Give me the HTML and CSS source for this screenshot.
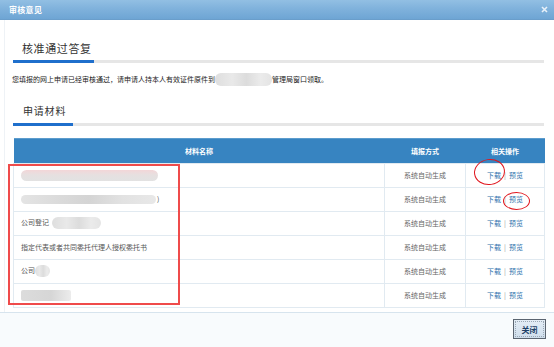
FILE: index.html
```html
<!DOCTYPE html>
<html lang="zh-CN">
<head>
    <meta charset="UTF-8">
    <title>审核意见</title>
    <link rel="stylesheet" href="styles.css">
</head>
<body>
    <div class="dialog">
        <div class="titlebar">
            <span class="title">审核意见</span>
            <svg class="close" width="7" height="7" viewBox="0 0 7 7">
                <path d="M1 1 L6 6 M6 1 L1 6" stroke="#e8f1f9" stroke-width="1.6"/>
            </svg>
        </div>
        <div class="content">
            <div class="section-title">核准通过答复</div>
            <div class="bar"><span class="bar-fill"></span></div>
            <p class="notice">您填报的网上申请已经审核通过，请申请人持本人有效证件原件到<span class="blur blur-notice"></span>管理局窗口领取。</p>
            <div class="section-title second">申请材料</div>
            <div class="bar"><span class="bar-fill short"></span></div>
            <div class="table-wrap">
                <table class="materials">
                    <thead>
                        <tr>
                            <th class="col-name">材料名称</th>
                            <th class="col-way">填报方式</th>
                            <th class="col-op">相关操作</th>
                        </tr>
                    </thead>
                    <tbody>
                        <tr>
                            <td class="name"><span class="blur blur-pink"></span></td>
                            <td class="way">系统自动生成</td>
                            <td class="op"><a href="#">下载</a><span class="sep">|</span><a href="#">预览</a></td>
                        </tr>
                        <tr>
                            <td class="name"><span class="blur blur-long"></span>)</td>
                            <td class="way">系统自动生成</td>
                            <td class="op"><a href="#">下载</a><span class="sep">|</span><a href="#">预览</a></td>
                        </tr>
                        <tr>
                            <td class="name">公司登记<span class="blur blur-mid"></span></td>
                            <td class="way">系统自动生成</td>
                            <td class="op"><a href="#">下载</a><span class="sep">|</span><a href="#">预览</a></td>
                        </tr>
                        <tr>
                            <td class="name">指定代表或者共同委托代理人授权委托书</td>
                            <td class="way">系统自动生成</td>
                            <td class="op"><a href="#">下载</a><span class="sep">|</span><a href="#">预览</a></td>
                        </tr>
                        <tr>
                            <td class="name">公司<span class="blur blur-small"></span></td>
                            <td class="way">系统自动生成</td>
                            <td class="op"><a href="#">下载</a><span class="sep">|</span><a href="#">预览</a></td>
                        </tr>
                        <tr>
                            <td class="name"><span class="blur blur-last"></span></td>
                            <td class="way">系统自动生成</td>
                            <td class="op"><a href="#">下载</a><span class="sep">|</span><a href="#">预览</a></td>
                        </tr>
                    </tbody>
                </table>
                <div class="mark-box"></div>
                <div class="mark-ring ring-download"></div>
                <div class="mark-ring ring-preview"></div>
            </div>
        </div>
        <div class="footer">
            <button class="btn-close">关闭</button>
        </div>
    </div>
</body>
</html>
```

FILE: styles.css
```css
body {
    margin: 0;
    font-family: "Liberation Sans", "Noto Sans CJK SC", sans-serif;
    background: #fff;
}
.dialog {
    width: 554px;
    height: 347px;
    display: flex;
    flex-direction: column;
    overflow: hidden;
}
.titlebar {
    height: 20px;
    flex: none;
    display: flex;
    align-items: center;
    justify-content: space-between;
    padding: 0 6px 0 9px;
    background: linear-gradient(#92bfe3, #80b2dc 45%, #6ea5d4);
    border-bottom: 1px solid #6a9ecb;
    box-sizing: border-box;
}
.title {
    color: #fff;
    font-size: 8px;
    font-weight: bold;
    letter-spacing: 0.3px;
}
.close {
    display: block;
}
.content {
    flex: 1;
    padding: 20px 10px 0 13px;
    border-left: 1px solid #eef2f6;
    margin-left: 4px;
    padding-left: 8px;
}
.section-title {
    font-family: "Noto Sans CJK SC", sans-serif;
    font-size: 11px;
    line-height: 16px;
    color: #333;
    padding-left: 9px;
    letter-spacing: 0.6px;
}
.section-title.second {
    margin-top: 17px;
    font-size: 10px;
    letter-spacing: 0.8px;
    padding-left: 10px;
}
.bar {
    margin-top: 4px;
    height: 3px;
    background: #e6e6e6;
}
.bar-fill {
    display: block;
    width: 81px;
    height: 3px;
    background: #1f6fcc;
}
.bar-fill.short {
    width: 60px;
}
.notice {
    margin: 11px 0 0 -1px;
    font-family: "Noto Sans CJK SC", sans-serif;
    font-size: 7px;
    line-height: 10px;
    color: #222;
}
.blur {
    display: inline-block;
    vertical-align: middle;
    height: 11px;
    border-radius: 6px;
    background: linear-gradient(90deg, #dedede, #e9e9e9 30%, #dcdcdc 55%, #ebebeb 80%, #e4e4e4);
    filter: blur(0.6px);
}
.blur-notice {
    width: 57px;
    height: 13px;
    margin: -2px 0 0;
}
.table-wrap {
    position: relative;
    margin-top: 12px;
}
.materials {
    width: 531px;
    border-collapse: collapse;
    table-layout: fixed;
    font-family: "Noto Sans CJK SC", sans-serif;
    font-size: 7px;
}
.materials th {
    height: 24px;
    padding: 0;
    background: #3784c1;
    color: #fff;
    font-weight: bold;
    border-top: 1px solid #5c9ccd;
}
.col-name { width: 371px; }
.col-way { width: 81px; }
.col-op { width: 79px; }
.materials td {
    height: 23px;
    padding: 0;
    border: 1px solid #e1eaf1;
    color: #666;
}
.materials td.name {
    padding-left: 7px;
    color: #555;
}
.materials td.way {
    text-align: center;
}
.materials td.op {
    text-align: center;
}
.op a {
    color: #2f73ad;
    text-decoration: none;
}
.sep {
    color: #999;
    margin: 0 3px;
}
.blur-pink {
    width: 137px;
    background: linear-gradient(#f3d6d8, #e6e0e0 45%, #e2e2e2);
}
.blur-long {
    width: 135px;
    height: 9px;
    margin-right: 1px;
    background: linear-gradient(90deg, #e4e4e4, #dadada 30%, #d4d4d4 50%, #e2e2e2 75%, #e8e8e8);
}
.blur-mid {
    width: 49px;
    height: 12px;
    margin-left: 3px;
}
.blur-small {
    width: 15px;
    height: 12px;
}
.blur-last {
    width: 50px;
    border-radius: 2px;
    background: linear-gradient(90deg, #dcdcdc, #d6d6d6 60%, #ececec);
}
.mark-box {
    position: absolute;
    left: -5px;
    top: 26px;
    width: 168px;
    height: 137px;
    border: 2px solid #ef4b4b;
}
.mark-ring {
    position: absolute;
    border: 1.5px solid #e0141c;
    border-radius: 50%;
}
.ring-download {
    left: 461px;
    top: 21px;
    width: 29px;
    height: 24px;
    transform: rotate(-8deg);
}
.ring-preview {
    left: 490px;
    top: 54px;
    width: 25px;
    height: 16px;
}
.footer {
    height: 35px;
    flex: none;
    box-sizing: border-box;
    border-top: 1px solid #d7e4ee;
    background: #f8fbfd;
    display: flex;
    justify-content: flex-end;
    align-items: flex-start;
    padding: 6px 8px 0 0;
}
.btn-close {
    width: 33px;
    height: 20px;
    padding: 0;
    border: 1px solid #5a6470;
    outline: 1px dotted #9aa7b4;
    outline-offset: -3px;
    background: linear-gradient(#e4edf6, #cfdeec);
    color: #1d3f66;
    font-family: "Noto Sans CJK SC", sans-serif;
    font-size: 8px;
    font-weight: bold;
}
```
